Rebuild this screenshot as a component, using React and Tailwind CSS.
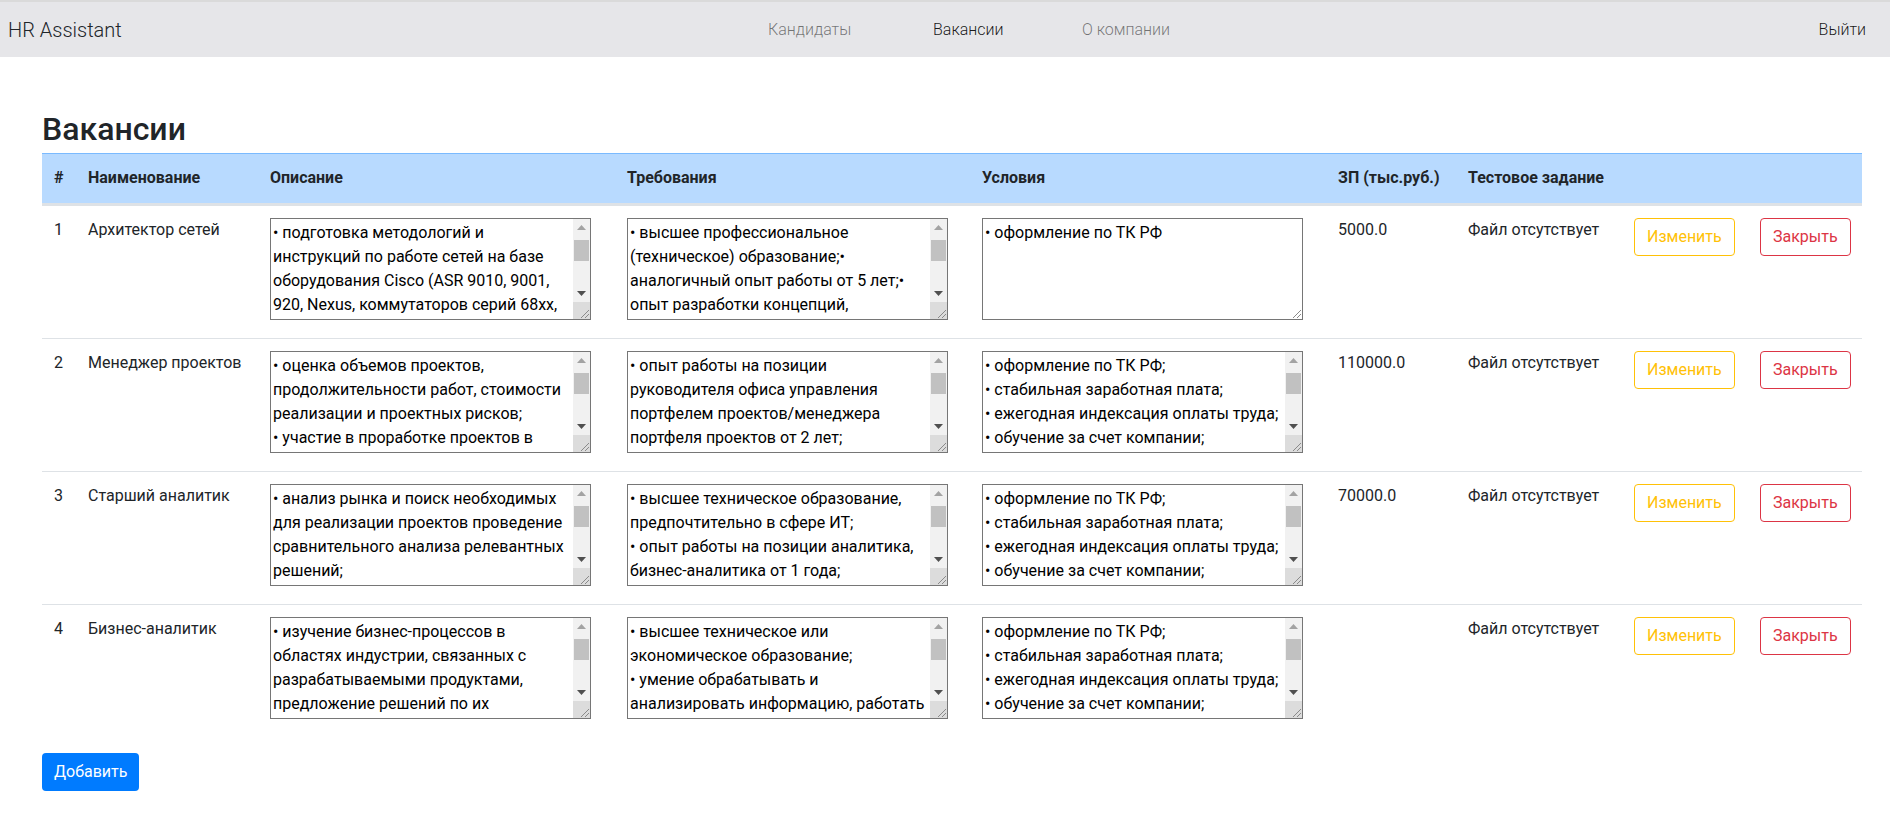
import { useState } from "react";

const conditionsFull =
  "• оформление по ТК РФ;\n• стабильная заработная плата;\n• ежегодная индексация оплаты труда;\n• обучение за счет компании;\n• ДМС после испытательного срока;\n• комфортный офис в центре города;\n• гибкое начало рабочего дня.";

const vacancies = [
  {
    id: 1,
    name: "Архитектор сетей",
    description:
      "• подготовка методологий и инструкций по работе сетей на базе оборудования Cisco (ASR 9010, 9001, 920, Nexus, коммутаторов серий 68xx, 45xx, 38xx, 29xx);\n• проектирование и развитие сетевой инфраструктуры компании;\n• участие в планировании миграции сетевых сервисов;\n• подготовка технической документации.",
    requirements:
      "• высшее профессиональное (техническое) образование;• аналогичный опыт работы от 5 лет;• опыт разработки концепций, архитектуры и технических решений;• знание протоколов маршрутизации BGP, OSPF, IS-IS, MPLS;• наличие сертификатов Cisco CCNP/CCIE будет преимуществом.",
    conditions: "• оформление по ТК РФ",
    salary: "5000.0",
  },
  {
    id: 2,
    name: "Менеджер проектов",
    description:
      "• оценка объемов проектов, продолжительности работ, стоимости реализации и проектных рисков;\n• участие в проработке проектов в части планирования сроков, ресурсов и бюджета;\n• контроль выполнения работ по проекту;\n• подготовка отчетности для руководства.",
    requirements:
      "• опыт работы на позиции руководителя офиса управления портфелем проектов/менеджера портфеля проектов от 2 лет;\n• знание методологий управления проектами (PMBOK, Agile);\n• опыт работы с MS Project, Jira;\n• развитые коммуникативные навыки.",
    conditions: conditionsFull,
    salary: "110000.0",
  },
  {
    id: 3,
    name: "Старший аналитик",
    description:
      "• анализ рынка и поиск необходимых для реализации проектов проведение сравнительного анализа релевантных решений;\n• сбор и формализация требований заказчика;\n• подготовка технических заданий и спецификаций;\n• взаимодействие с командой разработки.",
    requirements:
      "• высшее техническое образование, предпочтительно в сфере ИТ;\n• опыт работы на позиции аналитика, бизнес-аналитика от 1 года;\n• знание нотаций BPMN, UML;\n• умение работать с большим объемом информации.",
    conditions: conditionsFull,
    salary: "70000.0",
  },
  {
    id: 4,
    name: "Бизнес-аналитик",
    description:
      "• изучение бизнес-процессов в областях индустрии, связанных с разрабатываемыми продуктами, предложение решений по их оптимизации и автоматизации;\n• формирование требований к продуктам;\n• подготовка презентаций и отчетов.",
    requirements:
      "• высшее техническое или экономическое образование;\n• умение обрабатывать и анализировать информацию, работать с большими объемами данных;\n• знание SQL и Excel на уровне уверенного пользователя;\n• внимательность и ответственность.",
    conditions: conditionsFull,
    salary: "",
  },
];

// classic windows-like scrollbar, headless chrome hides the native one
function FakeScrollbar() {
  return (
    <div className="absolute right-[1px] top-[1px] bottom-[1px] w-[17px] flex flex-col bg-[#f1f1f1] pointer-events-none">
      <div className="h-[17px] flex items-center justify-center">
        <svg width="9" height="5" viewBox="0 0 9 5">
          <path d="M0 5 L4.5 0 L9 5 Z" fill="#a3a3a3" />
        </svg>
      </div>
      <div className="flex-1 pt-[4px]">
        <div className="h-[21px] mx-[1px] bg-[#c1c1c1]" />
      </div>
      <div className="h-[17px] flex items-center justify-center">
        <svg width="9" height="5" viewBox="0 0 9 5">
          <path d="M0 0 L9 0 L4.5 5 Z" fill="#505050" />
        </svg>
      </div>
      <div className="h-[17px] bg-[#dcdcdc]" />
    </div>
  );
}

function Resizer() {
  return (
    <svg
      className="absolute right-[2px] bottom-[2px] pointer-events-none"
      width="9"
      height="9"
      viewBox="0 0 9 9"
    >
      <path d="M9 1 L1 9 M9 5 L5 9" stroke="#8a8a8a" strokeWidth="1" />
    </svg>
  );
}

function Box({ value, scroll = true }) {
  const [text, setText] = useState(value);
  return (
    <div className="relative w-[321px] h-[102px] mb-[6px]">
      <textarea
        value={text}
        onChange={(e) => setText(e.target.value)}
        rows={4}
        className={`block w-full h-full border border-[#767676] bg-white pl-[2px] py-[2px] text-black text-[16px] leading-[24px] resize-none overflow-hidden ${scroll ? "pr-[19px]" : "pr-[2px]"}`}
      />
      {scroll && <FakeScrollbar />}
      <Resizer />
    </div>
  );
}

export default function App() {
  return (
    <div className="min-h-screen bg-white text-[#212529] font-['Roboto',sans-serif] text-[16px] leading-[24px]">
      <nav className="h-[57px] border-t-2 border-[#dadada] bg-[#e6e6e9] flex items-center px-[8px]">
        <span className="text-[20px] font-light text-[#212529] w-[760px]">HR Assistant</span>
        <div className="flex items-center font-light">
          <span className="text-black/50 w-[165px]">Кандидаты</span>
          <span className="text-black/90 w-[149px]">Вакансии</span>
          <span className="text-black/50">О компании</span>
        </div>
        <span className="ml-auto mr-[16px] font-light text-black/90">Выйти</span>
      </nav>

      <main className="pl-[42px] pr-[28px] pt-[53px]">
        <h2 className="text-[32px] leading-[38px] font-medium mb-[5px]">Вакансии</h2>
        <table className="w-[1820px] table-fixed border-collapse mb-[16px]">
          <thead>
            <tr className="bg-[#b8daff] border-t border-[#7abaff] border-b-[3px] border-b-[#dee2e6]">
              <th className="w-[34px] px-3 pt-3 pb-[13px] text-left font-bold">#</th>
              <th className="w-[182px] px-3 pt-3 pb-[13px] text-left font-bold">Наименование</th>
              <th className="w-[357px] px-3 pt-3 pb-[13px] text-left font-bold">Описание</th>
              <th className="w-[355px] px-3 pt-3 pb-[13px] text-left font-bold">Требования</th>
              <th className="w-[356px] px-3 pt-3 pb-[13px] text-left font-bold">Условия</th>
              <th className="w-[130px] px-3 pt-3 pb-[13px] text-left font-bold">ЗП (тыс.руб.)</th>
              <th className="w-[166px] px-3 pt-3 pb-[13px] text-left font-bold">Тестовое задание</th>
              <th className="w-[126px] px-3 pt-3 pb-[13px]"></th>
              <th className="w-[114px] px-3 pt-3 pb-[13px]"></th>
            </tr>
          </thead>
          <tbody>
            {vacancies.map((v, i) => (
              <tr key={v.id} className={i === 0 ? "" : "border-t border-[#dee2e6]"}>
                <td className="p-3 align-top">{v.id}</td>
                <td className="p-3 align-top">{v.name}</td>
                <td className="p-3 align-top">
                  <Box value={v.description} />
                </td>
                <td className="p-3 align-top">
                  <Box value={v.requirements} />
                </td>
                <td className="p-3 align-top">
                  <Box value={v.conditions} scroll={v.id !== 1} />
                </td>
                <td className="p-3 align-top">{v.salary}</td>
                <td className="p-3 align-top">Файл отсутствует</td>
                <td className="p-3 align-top">
                  <button className="h-[38px] px-[12px] rounded-[4px] border border-[#ffc107] text-[#ffc107] bg-transparent">
                    Изменить
                  </button>
                </td>
                <td className="p-3 align-top">
                  <button className="h-[38px] px-[12px] rounded-[4px] border border-[#dc3545] text-[#dc3545] bg-transparent">
                    Закрыть
                  </button>
                </td>
              </tr>
            ))}
          </tbody>
        </table>
        <button className="h-[38px] px-[12px] rounded-[4px] bg-[#007bff] text-white">Добавить</button>
      </main>
    </div>
  );
}
